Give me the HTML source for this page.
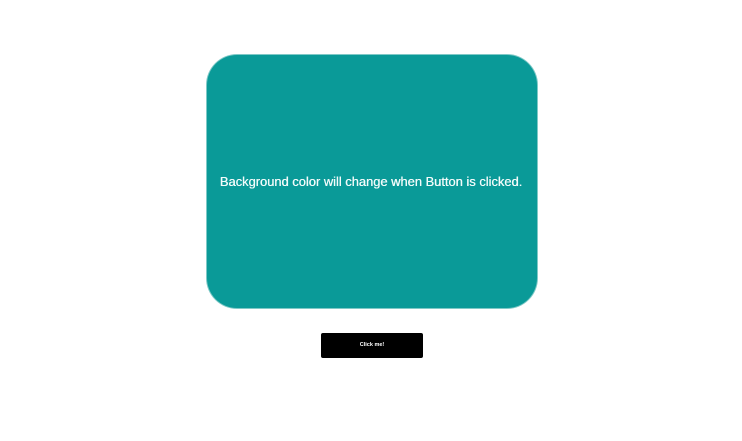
<!DOCTYPE html>
<html><head><style>
html,body{margin:0;padding:0;background:#fff;width:742px;height:441px;overflow:hidden;font-family:"Liberation Sans",sans-serif;}
.box{position:absolute;left:207px;top:55px;width:330px;height:253px;background:#0a9a98;border-radius:30px;box-shadow:0 0 0 1px #7fc9c7;}
.t{position:absolute;left:0;right:0;top:174px;text-align:center;color:#f2fbfa;font-size:12.9px;text-shadow:0.3px 0 0 #f2fbfa;}
.btn{position:absolute;left:321px;top:333px;width:102px;height:25px;background:#000;border-radius:2px;color:#fff;font-size:5.5px;font-weight:bold;text-align:center;line-height:25px;}
</style></head><body>
<div class="box"></div>
<div class="t">Background color will change when Button is clicked.</div>
<div class="btn">Click me!</div>
</body></html>
